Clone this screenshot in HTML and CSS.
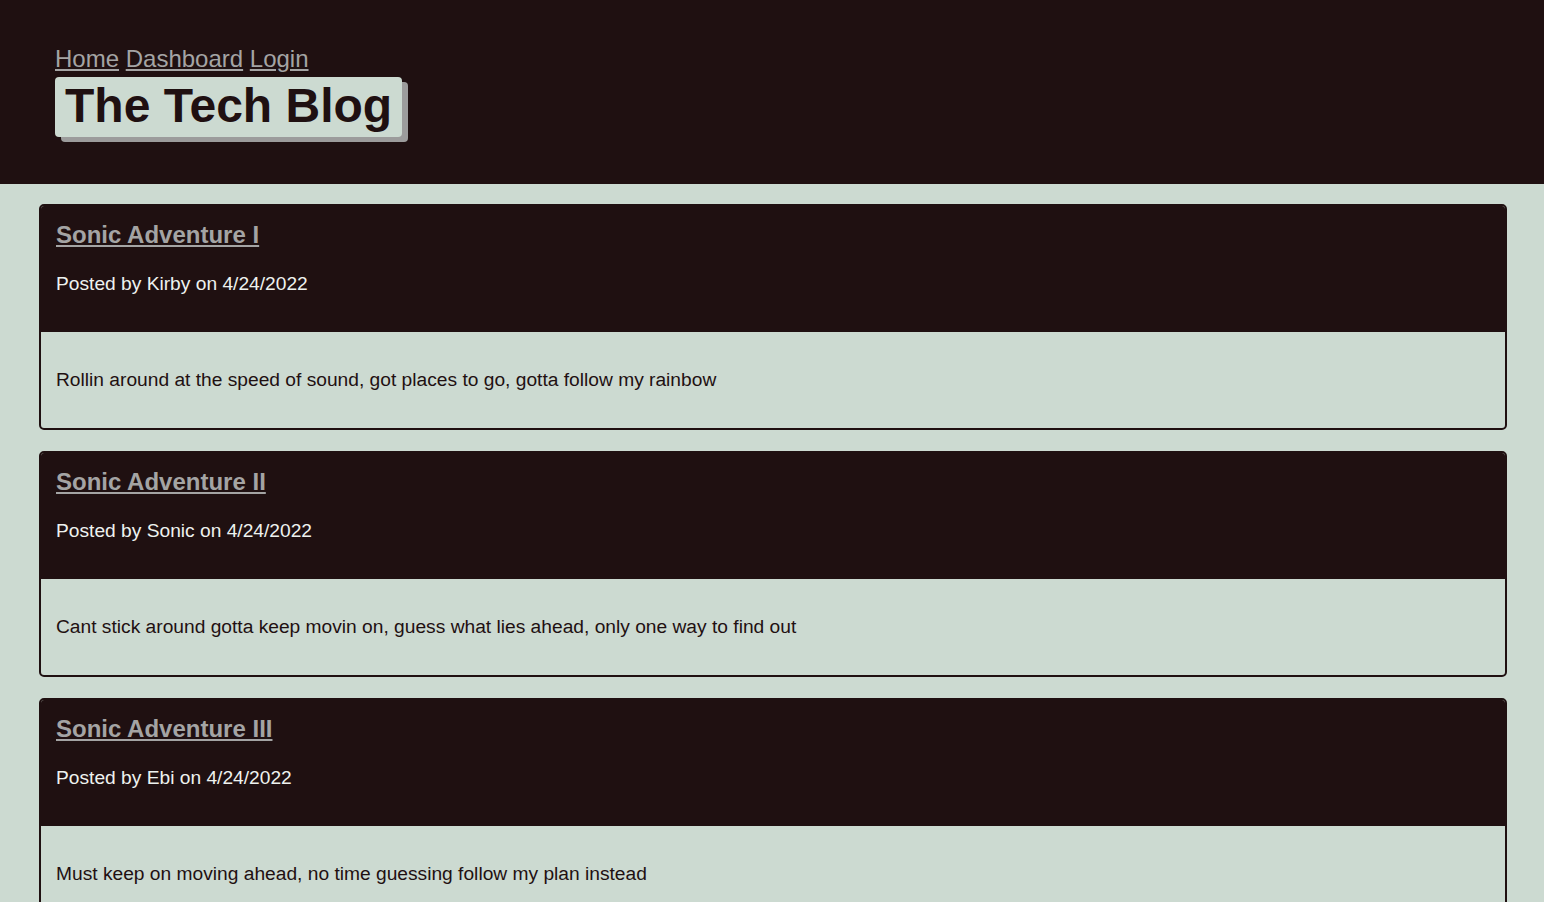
FILE: index.html
```html
<!DOCTYPE html>
<html lang="en">
<head>
<meta charset="utf-8">
<title>The Tech Blog</title>
<link rel="stylesheet" href="styles.css">
</head>
<body>
<header class="site-header">
  <nav class="nav">
    <a href="#">Home</a>
    <a href="#">Dashboard</a>
    <a href="#">Login</a>
  </nav>
  <h1 class="brand">The Tech Blog</h1>
</header>
<main class="posts">
  <article class="post">
    <div class="post-head">
      <h2 class="post-title"><a href="#">Sonic Adventure I</a></h2>
      <p class="post-meta">Posted by Kirby on 4/24/2022</p>
    </div>
    <div class="post-body">
      <p>Rollin around at the speed of sound, got places to go, gotta follow my rainbow</p>
    </div>
  </article>
  <article class="post">
    <div class="post-head">
      <h2 class="post-title"><a href="#">Sonic Adventure II</a></h2>
      <p class="post-meta">Posted by Sonic on 4/24/2022</p>
    </div>
    <div class="post-body">
      <p>Cant stick around gotta keep movin on, guess what lies ahead, only one way to find out</p>
    </div>
  </article>
  <article class="post">
    <div class="post-head">
      <h2 class="post-title"><a href="#">Sonic Adventure III</a></h2>
      <p class="post-meta">Posted by Ebi on 4/24/2022</p>
    </div>
    <div class="post-body">
      <p>Must keep on moving ahead, no time guessing follow my plan instead</p>
    </div>
  </article>
</main>
</body>
</html>
```

FILE: styles.css
```css
* { box-sizing: border-box; }

body {
  margin: 0;
  background: #ccdad1;
  font-family: "Liberation Sans", Arial, sans-serif;
  color: #1f1011;
}

.site-header {
  background: #1f1011;
  padding: 45px 55px 47px;
}

.nav {
  font-size: 24px;
  line-height: 28px;
}

.nav a {
  color: #a4a4a4;
  text-decoration: underline;
}

.brand {
  display: inline-block;
  margin: 4px 0 0;
  padding: 1px 10px 4px;
  font-size: 48px;
  font-weight: bold;
  line-height: 55px;
  background: #ccdad1;
  color: #1f1011;
  border-radius: 4px;
  box-shadow: 6px 5px 0 #9c9c9c;
}

.posts {
  padding: 20px 37px 20px 39px;
  display: flex;
  flex-direction: column;
  gap: 21px;
}

.post {
  border: 2px solid #1f1011;
  border-radius: 5px;
  overflow: hidden;
}

.post-head {
  background: #1f1011;
  padding: 15px 15px 37px;
}

.post-title {
  margin: 0;
  font-size: 24px;
  line-height: 28px;
  font-weight: bold;
}

.post-title a {
  color: #a4a4a4;
  text-decoration: underline;
}

.post-meta {
  margin: 24px 0 0;
  font-size: 19.2px;
  line-height: 22px;
  color: #eef2ef;
}

.post-body {
  padding: 37px 15px 37px;
}

.post-body p {
  margin: 0;
  font-size: 19.2px;
  line-height: 22px;
  color: #1f1011;
}
```
